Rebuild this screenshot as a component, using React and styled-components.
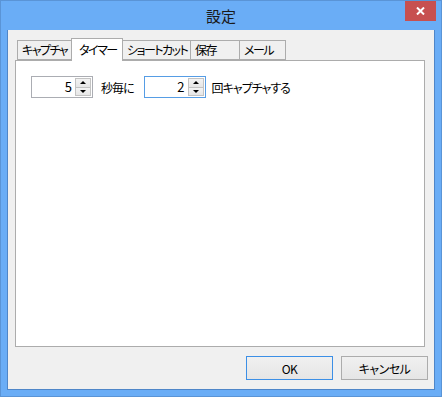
import styled, { createGlobalStyle } from "styled-components";

const GlobalStyle = createGlobalStyle`
  body {
    margin: 0;
    font-family: "Noto Sans CJK JP", "Noto Sans", sans-serif;
    font-feature-settings: "palt";
  }
`;

const Window = styled.div`
  width: 442px;
  height: 397px;
  box-sizing: border-box;
  border: 1px solid #5a94d6;
  background: #6aadf6;
  display: flex;
  flex-direction: column;
`;

const TitleBar = styled.div`
  height: 29px;
  display: grid;
  grid-template-columns: 1fr auto 1fr;
  align-items: start;
`;

const Title = styled.div`
  grid-column: 2;
  font-size: 15px;
  line-height: 30px;
  color: #1a1a1a;
`;

const CloseButton = styled.div`
  grid-column: 3;
  justify-self: end;
  margin-right: 5px;
  width: 31px;
  height: 20px;
  background: #c75050;
  display: flex;
  align-items: center;
  justify-content: center;
`;

const Client = styled.div`
  flex: 1;
  margin: 0 6px 6px 6px;
  background: #f0f0f0;
  border: 1px solid #4f86c8;
  border-top: none;
  display: flex;
  flex-direction: column;
  padding: 9px 9px 9px 7px;
`;

const TabStrip = styled.div`
  display: flex;
  align-items: flex-end;
  height: 22px;
  padding-left: 2px;
  margin-bottom: -1px;
  position: relative;
  z-index: 1;
`;

const Tab = styled.div`
  box-sizing: border-box;
  width: ${(p) => p.$w}px;
  height: ${(p) => (p.$active ? 23 : 20)}px;
  margin-left: -1px;
  margin-bottom: ${(p) => (p.$active ? 0 : 1)}px;
  padding-left: ${(p) => (p.$active ? 7 : 4)}px;
  padding-top: ${(p) => (p.$active ? 2 : 0)}px;
  border: 1px solid #acacac;
  border-bottom: ${(p) => (p.$active ? "none" : "1px solid #acacac")};
  background: ${(p) => (p.$active ? "#fff" : "#f0f0f0")};
  font-size: 12px;
  letter-spacing: -1.5px;
  line-height: 18px;
  color: #000;
  white-space: nowrap;
  &:first-child {
    margin-left: 0;
  }
`;

const Panel = styled.div`
  flex: 1;
  background: #fff;
  border: 1px solid #acacac;
  padding: 15px 15px;
`;

const Row = styled.div`
  display: flex;
  align-items: center;
`;

const SpinBox = styled.div`
  box-sizing: border-box;
  width: 62px;
  height: 22px;
  border: 1px solid ${(p) => (p.$focused ? "#569de5" : "#abadb3")};
  display: flex;
  align-items: stretch;
  padding: 1px;
`;

const SpinValue = styled.div`
  flex: 1;
  text-align: right;
  padding-right: 3px;
  font-size: 13px;
  line-height: 18px;
  color: #000;
`;

const SpinButtons = styled.div`
  width: 16px;
  display: flex;
  flex-direction: column;
`;

const SpinButton = styled.div`
  flex: 1;
  box-sizing: border-box;
  border: 1px solid #c3c3c3;
  margin-top: ${(p) => (p.$down ? "-1px" : "0")};
  background: linear-gradient(#f3f3f3, #e6e6e6);
  display: flex;
  align-items: center;
  justify-content: center;
  &::after {
    content: "";
    width: 0;
    height: 0;
    border-left: 3px solid transparent;
    border-right: 3px solid transparent;
    ${(p) =>
      p.$down
        ? "border-top: 3px solid #000;"
        : "border-bottom: 3px solid #000;"}
  }
`;

const Label = styled.span`
  font-size: 12px;
  letter-spacing: -1px;
  color: #000;
  margin: 0 ${(p) => p.$right}px 0 ${(p) => p.$left}px;
`;

const ButtonRow = styled.div`
  display: flex;
  justify-content: flex-end;
  gap: 8px;
  margin-top: 9px;
  margin-right: -3px;
`;

const DialogButton = styled.div`
  box-sizing: border-box;
  width: 87px;
  height: 24px;
  border: 1px solid ${(p) => (p.$default ? "#3c8fe6" : "#acacac")};
  background: linear-gradient(#f0f0f0, #e5e5e5);
  display: flex;
  align-items: center;
  justify-content: center;
  font-size: 12px;
  letter-spacing: -0.5px;
  color: #000;
`;

function Spinner({ value, focused }) {
  return (
    <SpinBox $focused={focused}>
      <SpinValue>{value}</SpinValue>
      <SpinButtons>
        <SpinButton />
        <SpinButton $down />
      </SpinButtons>
    </SpinBox>
  );
}

const tabs = [
  { label: "キャプチャ", w: 55 },
  { label: "タイマー", w: 52, active: true },
  { label: "ショートカット", w: 69 },
  { label: "保存", w: 50 },
  { label: "メール", w: 47 },
];

export default function App() {
  return (
    <>
      <GlobalStyle />
      <Window>
        <TitleBar>
          <Title>設定</Title>
          <CloseButton>
            <svg width="9" height="8" viewBox="0 0 9 8">
              <path d="M1 0.5 L8 7.5 M8 0.5 L1 7.5" stroke="#fff" strokeWidth="2" />
            </svg>
          </CloseButton>
        </TitleBar>
        <Client>
          <TabStrip>
            {tabs.map((t) => (
              <Tab key={t.label} $w={t.w} $active={t.active}>
                {t.label}
              </Tab>
            ))}
          </TabStrip>
          <Panel>
            <Row>
              <Spinner value="5" />
              <Label $left={8} $right={10}>秒毎に</Label>
              <Spinner value="2" focused />
              <Label $left={6} $right={0}>回キャプチャする</Label>
            </Row>
          </Panel>
          <ButtonRow>
            <DialogButton $default>OK</DialogButton>
            <DialogButton>キャンセル</DialogButton>
          </ButtonRow>
        </Client>
      </Window>
    </>
  );
}
